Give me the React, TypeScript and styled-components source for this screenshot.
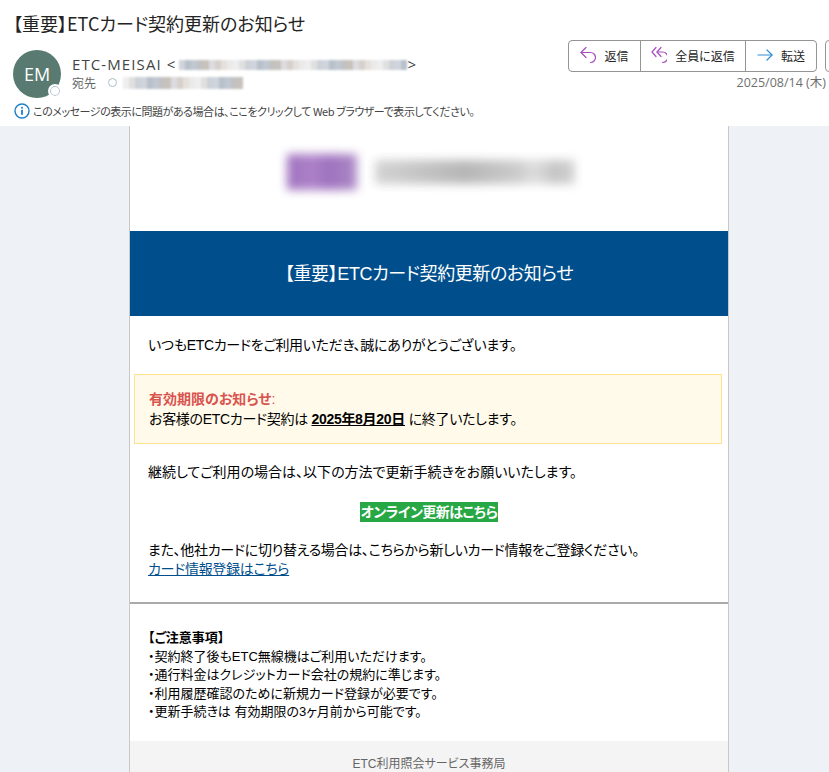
import React from "react";
import styled, { createGlobalStyle } from "styled-components";

const cjk = `"Noto Sans CJK JP", "Noto Sans", sans-serif`;
const latinCjk = `"Liberation Sans", "Noto Sans CJK JP", sans-serif`;

const GlobalStyle = createGlobalStyle`
  html, body {
    margin: 0;
    padding: 0;
    background: #fff;
    font-family: ${cjk};
    font-feature-settings: "palt";
  }
`;

const Page = styled.div`
  width: 829px;
  height: 772px;
  overflow: hidden;
  display: flex;
  flex-direction: column;
  color: #242424;
`;

const MailHeader = styled.header`
  height: 126px;
  flex: none;
  padding: 10px 0 0 13px;
  box-sizing: border-box;
  background: #fff;
`;

const Subject = styled.h1`
  margin: 0 0 14px 0;
  font-size: 18px;
  line-height: 26px;
  font-weight: 400;
  color: #242424;
`;

const SenderRow = styled.div`
  display: flex;
  height: 48px;
`;

const Avatar = styled.div`
  position: relative;
  width: 48px;
  height: 48px;
  flex: none;
  border-radius: 50%;
  background: #587a70;
  color: #fff;
  font: 400 18px/48px "Open Sans", sans-serif;
  text-align: center;
`;

const Presence = styled.span`
  position: absolute;
  right: -1px;
  bottom: 0;
  width: 14px;
  height: 14px;
  box-sizing: border-box;
  border-radius: 50%;
  border: 2px solid #fff;
  background: #fff;
  box-shadow: inset 0 0 0 1px #a9bfcc;
`;

const SenderInfo = styled.div`
  margin-left: 11px;
  flex: 1;
  padding-top: 5px;
`;

const SenderLine = styled.div`
  display: flex;
  align-items: center;
  height: 19px;
  font: 400 15px/19px "Open Sans", ${cjk};
  letter-spacing: 1.1px;
  color: #444;
  white-space: nowrap;
`;

const ToLine = styled.div`
  display: flex;
  align-items: center;
  height: 17px;
  font-size: 12px;
  color: #666;
`;

const ToDot = styled.span`
  width: 9px;
  height: 9px;
  box-sizing: border-box;
  border-radius: 50%;
  border: 1px solid #a9bfcc;
  margin: 0 3px 0 12px;
`;

const Mosaic = styled.span`
  display: inline-grid;
  grid-auto-flow: column;
  grid-auto-columns: 6px;
  filter: blur(1px);
  margin-left: 3px;
`;

const MosaicCell = styled.span<{ $tone: string; $h: number }>`
  height: ${(p) => p.$h}px;
  background: ${(p) => p.$tone};
`;

const Actions = styled.div`
  display: flex;
  flex-direction: column;
  align-items: flex-end;
  margin-top: -10px;
  width: 261px;
  flex: none;
`;

const ToolbarRow = styled.div`
  display: flex;
  gap: 8px;
  width: 261px;
`;

const ButtonGroup = styled.div`
  display: flex;
  height: 32px;
  box-sizing: border-box;
  border: 1px solid #949494;
  border-radius: 4px;
  flex: none;
`;

const ActionButton = styled.div<{ $w: number }>`
  width: ${(p) => p.$w}px;
  display: flex;
  align-items: center;
  justify-content: center;
  gap: 8px;
  padding-bottom: 2px;
  box-sizing: border-box;
  font-size: 12px;
  color: #242424;
  & + & {
    border-left: 1px solid #949494;
  }
`;

const DateText = styled.div`
  margin: 3px 3px 0 0;
  font: 400 12.5px/16px "Open Sans", ${cjk};
  color: #6e6e6e;
  white-space: nowrap;
`;

const InfoBar = styled.div`
  display: flex;
  align-items: center;
  gap: 3px;
  margin: 4px 0 0 1px;
  height: 18px;
  font-size: 11px;
  letter-spacing: -0.45px;
  color: #444;
  white-space: pre;
`;

const Canvas = styled.div`
  flex: 1;
  background: #eef1f6;
  display: flex;
  padding-left: 129px;
  min-height: 0;
`;

const Card = styled.main`
  width: 598px;
  background: #fff;
  border-left: 1px solid #c8c8c8;
  border-right: 1px solid #c8c8c8;
  font-family: ${latinCjk};
  font-size: 14px;
  color: #000;
`;

const LogoArea = styled.div`
  height: 105px;
  display: flex;
  align-items: flex-start;
  padding: 28px 0 0 157px;
  box-sizing: border-box;
  gap: 18px;
`;

const LogoMark = styled.div`
  width: 70px;
  height: 36px;
  background: linear-gradient(90deg, #9a6bbb 0%, #a97cc6 35%, #9a6bbb 60%, #a885c4 100%);
  filter: blur(5px);
  opacity: 0.95;
`;

const LogoText = styled.div`
  width: 200px;
  height: 24px;
  margin-top: 6px;
  background: linear-gradient(90deg, #ccc 0%, #aaa 45%, #c2c2c2 70%, #d8d8d8 80%, #bbb 90%, #ccc 100%);
  filter: blur(5px);
  opacity: 0.85;
`;

const Banner = styled.div`
  height: 85px;
  padding-bottom: 3px;
  box-sizing: border-box;
  background: #004f8c;
  color: #fff;
  display: flex;
  align-items: center;
  justify-content: center;
  font-size: 18px;
  font-weight: 400;
  letter-spacing: -0.4px;
`;

const Paragraph = styled.p<{ $top: number; $tight?: boolean }>`
  margin: ${(p) => p.$top}px 18px 0 18px;
  line-height: 19px;
  letter-spacing: ${(p) => (p.$tight ? "-0.3px" : "0")};
`;

const Notice = styled.div`
  margin: 19px 6px 0 4px;
  height: 70px;
  box-sizing: border-box;
  padding: 14px 14px 0;
  background: #fffae9;
  border: 1px solid #ffe28f;
  line-height: 20px;
  letter-spacing: -0.3px;
`;

const NoticeTitle = styled.strong`
  display: block;
  color: #d9534f;
  font-weight: 700;
  letter-spacing: 0;
`;

const Colon = styled.span`
  font-weight: 400;
`;

const Deadline = styled.strong`
  text-decoration: underline;
  font-weight: 700;
`;

const CtaRow = styled.div`
  margin-top: 20px;
  display: flex;
  justify-content: center;
`;

const Cta = styled.a`
  height: 20px;
  padding: 0 1px;
  background: #28a745;
  color: #fff;
  font-weight: 700;
  line-height: 20px;
  letter-spacing: -0.5px;
  white-space: nowrap;
`;

const PlainLink = styled.a`
  display: block;
  color: #004f8c;
  text-decoration: underline;
`;

const Rule = styled.hr`
  margin: 23px 0 0;
  border: 0;
  height: 2px;
  background: #aaa;
`;

const Notes = styled.div`
  margin: 25px 18px 0;
  line-height: 18.6px;
  font-size: 13px;
`;

const NotesTitle = styled.strong`
  display: block;
  font-weight: 700;
`;

const NoteLine = styled.div``;

const Footer = styled.footer`
  margin-top: 19px;
  background: #f4f4f4;
  padding-top: 14px;
  height: 60px;
  box-sizing: border-box;
  text-align: center;
  font-size: 12px;
  line-height: 18px;
  color: #666;
`;

const ReplyIcon = () => (
  <svg width="16" height="18" viewBox="0 0 16 18" fill="none" stroke="#a84fc0" strokeWidth="1.2" strokeLinecap="round" strokeLinejoin="round">
    <path d="M6 1.5 1 6.5l5 5" />
    <path d="M1 6.5h9.5a5 5 0 0 1 0 10" />
  </svg>
);

const ReplyAllIcon = () => (
  <svg width="16" height="18" viewBox="0 0 16 18" fill="none" stroke="#a84fc0" strokeWidth="1.2" strokeLinecap="round" strokeLinejoin="round">
    <path d="M5 1.5 1 6l4 4.5" />
    <path d="M10 1.5 6 6l4 4.5" />
    <path d="M6 6h5.5a5 5 0 0 1 0 10.5" />
  </svg>
);

const ForwardIcon = () => (
  <svg width="16" height="18" viewBox="0 0 16 18" fill="none" stroke="#2f8fd6" strokeWidth="1.2" strokeLinecap="round" strokeLinejoin="round">
    <path d="M1 9h14" />
    <path d="M10 4l5 5-5 5" />
  </svg>
);

const InfoIcon = () => (
  <svg width="16" height="16" viewBox="0 0 16 16">
    <circle cx="8" cy="8" r="7" fill="#fff" stroke="#1f7fc4" strokeWidth="1.4" />
    <circle cx="8" cy="4.8" r="1" fill="#1f7fc4" />
    <rect x="7.1" y="6.8" width="1.8" height="5" fill="#1f7fc4" />
  </svg>
);

const tones = ["#dcdce0", "#d0d4dc", "#e6e0dc", "#c0c8d2", "#eeeeee", "#c8c2bc", "#ccd2d8", "#d6d0cc", "#b8c0ca", "#eaeaea", "#c2c2c2", "#e0e0e0"];
const mosaicCells = (count: number, seed: number) =>
  Array.from({ length: count }, (_, i) => tones[(i * 7 + seed) % tones.length]);

const App: React.FC = () => {
  return (
    <Page>
      <GlobalStyle />
      <MailHeader>
        <Subject>【重要】ETCカード契約更新のお知らせ</Subject>
        <SenderRow>
          <Avatar>
            EM
            <Presence />
          </Avatar>
          <SenderInfo>
            <SenderLine>
              ETC-MEISAI &lt;
              <Mosaic>
                {mosaicCells(38, 1).map((tone, i) => (
                  <MosaicCell key={i} $tone={tone} $h={10} />
                ))}
              </Mosaic>
              &gt;
            </SenderLine>
            <ToLine>
              宛先
              <ToDot />
              <Mosaic>
                {mosaicCells(20, 4).map((tone, i) => (
                  <MosaicCell key={i} $tone={tone} $h={12} />
                ))}
              </Mosaic>
            </ToLine>
          </SenderInfo>
          <Actions>
            <ToolbarRow>
              <ButtonGroup>
                <ActionButton $w={71}>
                  <ReplyIcon />
                  返信
                </ActionButton>
                <ActionButton $w={105}>
                  <ReplyAllIcon />
                  全員に返信
                </ActionButton>
                <ActionButton $w={71}>
                  <ForwardIcon />
                  転送
                </ActionButton>
              </ButtonGroup>
              <ButtonGroup>
                <ActionButton $w={40} />
              </ButtonGroup>
            </ToolbarRow>
            <DateText>2025/08/14 (木)</DateText>
          </Actions>
        </SenderRow>
        <InfoBar>
          <InfoIcon />
          このメッセージの表示に問題がある場合は、ここをクリックして Web ブラウザーで表示してください。
        </InfoBar>
      </MailHeader>
      <Canvas>
        <Card>
          <LogoArea>
            <LogoMark />
            <LogoText />
          </LogoArea>
          <Banner>【重要】ETCカード契約更新のお知らせ</Banner>
          <Paragraph $top={20} $tight>
            いつもETCカードをご利用いただき、誠にありがとうございます。
          </Paragraph>
          <Notice>
            <NoticeTitle>
              有効期限のお知らせ<Colon>:</Colon>
            </NoticeTitle>
            お客様のETCカード契約は <Deadline>2025年8月20日</Deadline> に終了いたします。
          </Notice>
          <Paragraph $top={19}>継続してご利用の場合は、以下の方法で更新手続きをお願いいたします。</Paragraph>
          <CtaRow>
            <Cta>オンライン更新はこちら</Cta>
          </CtaRow>
          <Paragraph $top={19} $tight>
            また、他社カードに切り替える場合は、こちらから新しいカード情報をご登録ください。
            <PlainLink>カード情報登録はこちら</PlainLink>
          </Paragraph>
          <Rule />
          <Notes>
            <NotesTitle>【ご注意事項】</NotesTitle>
            <NoteLine>・契約終了後もETC無線機はご利用いただけます。</NoteLine>
            <NoteLine>・通行料金はクレジットカード会社の規約に準じます。</NoteLine>
            <NoteLine>・利用履歴確認のために新規カード登録が必要です。</NoteLine>
            <NoteLine>・更新手続きは 有効期限の3ヶ月前から可能です。</NoteLine>
          </Notes>
          <Footer>ETC利用照会サービス事務局</Footer>
        </Card>
      </Canvas>
    </Page>
  );
};

export default App;
